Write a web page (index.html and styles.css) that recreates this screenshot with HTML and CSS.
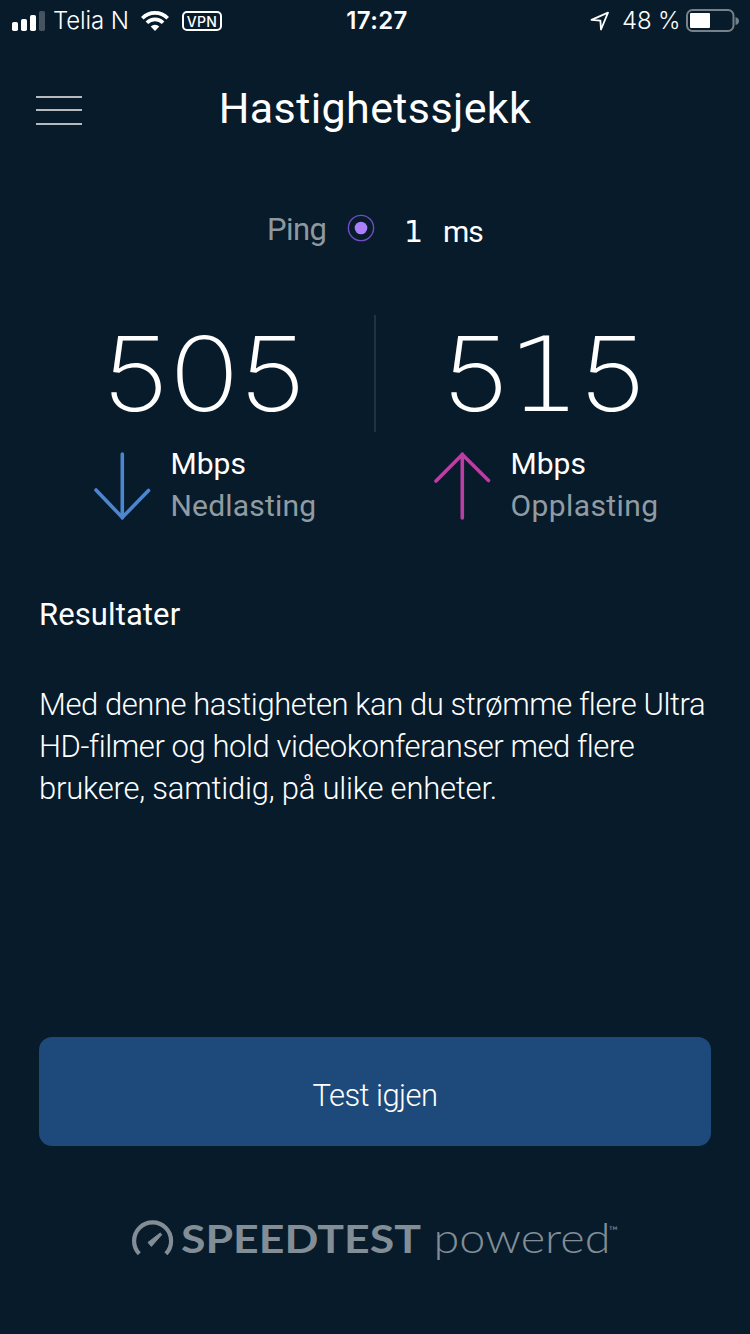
FILE: index.html
```html
<!DOCTYPE html>
<html lang="no">
<head>
<meta charset="utf-8">
<title>Hastighetssjekk</title>
<link rel="stylesheet" href="styles.css">
</head>
<body>
<div class="screen">
  <div class="status">
    <div class="status-left">
      <svg class="signal" width="34" height="20" viewBox="0 0 34 20"><g fill="#fff"><rect x="0" y="11" width="6" height="9" rx="1.8"/><rect x="9" y="8" width="6" height="12" rx="1.8"/><rect x="18" y="4" width="6" height="16" rx="1.8"/></g><rect x="27" y="0" width="6" height="20" rx="1.8" fill="#47545f"/></svg>
      <span class="carrier">Telia N</span>
      <svg class="wifi" width="28" height="20" viewBox="0 0 28 20"><g fill="none" stroke="#fff" stroke-width="3.7"><path d="M1.3 7.2a18 18 0 0 1 25.4 0"/><path d="M5.900 11.8a11.5 11.5 0 0 1 16.2 0"/></g><path d="M14 20l-4.3-4.4a6.1 6.1 0 0 1 8.6 0z" fill="#fff"/></svg>
      <span class="vpn">VPN</span>
    </div>
    <div class="clock">17:27</div>
    <div class="status-right">
      <svg class="arrow" width="20" height="20" viewBox="0 0 20 20"><path d="M1.500 8.800L18 1.700L11 18.500L10.400 9.600z" fill="none" stroke="#fff" stroke-width="1.800" stroke-linejoin="round"/></svg>
      <span class="percent">48 %</span>
      <svg class="battery" width="54" height="24" viewBox="0 0 54 24"><rect x="1" y="1" width="46.500" height="21" rx="5.500" fill="none" stroke="#77818a" stroke-width="2"/><rect x="4" y="4" width="20" height="15" rx="1" fill="#fff"/><path d="M49.500 8q3.500 1 3.500 4t-3.500 4z" fill="#77818a"/></svg>
    </div>
  </div>

  <header class="header">
    <svg class="menu" width="46" height="30" viewBox="0 0 46 30"><path d="M0 1h46v2H0zM0 14h46v2H0zM0 28h46v2H0z" fill="#b5babe"/></svg>
    <h1 class="title">Hastighetssjekk</h1>
  </header>

  <div class="ping">
    <span class="ping-label">Ping</span>
    <svg class="ping-dot" width="28" height="28" viewBox="0 0 28 28"><circle cx="14" cy="14" r="12.600" fill="none" stroke="#704dc0" stroke-width="1.400"/><circle cx="14" cy="14" r="6.300" fill="#ab7efa"/></svg>
    <span class="ping-value">1</span>
    <span class="ping-unit">ms</span>
  </div>

  <main class="speeds">
    <section class="speed">
      <div class="number"><span>5</span><span>0</span><span>5</span></div>
      <div class="detail">
        <svg width="58" height="70" viewBox="0 0 58 70"><path d="M28.300 3v64M2 39L28.300 66.500L54.500 39.500" fill="none" stroke="#4c86cf" stroke-width="3.600" stroke-linecap="round"/></svg>
        <div class="labels"><div class="unit">Mbps</div><div class="kind">Nedlasting</div></div>
      </div>
    </section>
    <div class="divider"></div>
    <section class="speed">
      <div class="number"><span>5</span><span class="one">1</span><span>5</span></div>
      <div class="detail">
        <svg width="58" height="70" viewBox="0 0 58 70"><path d="M28.300 67V3M2 30L28.300 3.500L54.500 29.500" fill="none" stroke="#bb3fa3" stroke-width="3.600" stroke-linecap="round"/></svg>
        <div class="labels"><div class="unit">Mbps</div><div class="kind up">Opplasting</div></div>
      </div>
    </section>
  </main>

  <section class="results">
    <h2 class="results-title">Resultater</h2>
    <p class="results-text">Med denne hastigheten kan du strømme flere Ultra<br>HD-filmer og hold videokonferanser med flere<br><span class="last-line">brukere, samtidig, på ulike enheter.</span></p>
  </section>

  <button class="retry">Test igjen</button>

  <footer class="brand">
    <svg width="500" height="60" viewBox="0 0 500 60" fill="#828d96">
      <path d="M19.300 43.800A18.500 18.500 0 1 1 45.900 43.800" fill="none" stroke="#828d96" stroke-width="4.200"/>
      <path d="M41.800 24.600L40.200 23L28 32.400L31.400 36.400z" stroke="#828d96" stroke-width="1"/>
      <text class="brand-bold" x="61" y="43" textLength="240" lengthAdjust="spacingAndGlyphs">SPEEDTEST</text>
      <text class="brand-light" x="313.500" y="43" textLength="177" lengthAdjust="spacingAndGlyphs">powered</text>
      <text class="brand-tm" x="489" y="25" textLength="10">™</text>
    </svg>
  </footer>
</div>
</body>
</html>
```
FILE: styles.css
```css
* { box-sizing: border-box; }
body { margin: 0; background: #071b2b; }
h1, h2, p { margin: 0; font-weight: 400; }
svg { display: block; flex: none; }
.screen {
  width: 750px; height: 1334px; overflow: hidden;
  display: flex; flex-direction: column;
  background: #071b2b; color: #fff;
  font-family: Roboto, "Liberation Sans", sans-serif;
  white-space: nowrap;
}
.status {
  height: 40px; padding: 0 10px 0 12px;
  display: grid; grid-template-columns: 1fr auto 1fr; align-items: center;
  font-family: Inter, sans-serif;
  font-size: 24px; line-height: 42px;
}
.status-left, .status-right { display: flex; align-items: center; }
.status-right { justify-content: flex-end; }
.signal, .wifi, .vpn, .arrow, .battery { position: relative; top: -0.5px; }
.carrier { width: 76px; margin-left: 7px; letter-spacing: -0.1px; font-weight: 350; }
.wifi { margin-left: 12px; }
.vpn {
  width: 40px; height: 20px; margin-left: 13px;
  border: 2px solid #fff; border-radius: 5px;
  font-size: 14px; line-height: 17px; font-weight: 500; text-align: center; letter-spacing: 0.4px;
}
.clock { padding-left: 2px; font-weight: 600; letter-spacing: 0.4px; }
.percent { width: 58px; margin: 0 6px 0 12px; letter-spacing: -0.2px; font-weight: 350; }
.header {
  height: 130px; padding: 40px 36px 0;
  display: grid; grid-template-columns: 46px 1fr 46px;
}
.menu { margin-top: 15px; }
.title { text-align: center; font-size: 43px; line-height: 57px; letter-spacing: 0.4px; }
.ping {
  height: 140px; padding: 38px 0 0 267px;
  display: flex; align-items: flex-start;
  font-size: 31px; line-height: 43px;
}
.ping-label { width: 79.5px; color: #8e989f; letter-spacing: -0.6px; }
.ping-dot { margin-top: 6px; }
.ping-value { width: 39px; margin: 2px 0 0 29.5px; font-family: "DejaVu Sans", sans-serif; font-size: 30px; }
.ping-unit { margin-top: 2px; font-size: 30px; letter-spacing: -1px; }
.speeds {
  height: 281px; padding: 5px 0 0 94px;
  display: grid; grid-template-columns: 280px 2px 338px; justify-content: start;
}
.speed:last-child { padding-left: 58px; }
.divider { height: 117px; background: #22323f; }
.number {
  height: 117px; padding-left: 7px;
  display: grid; grid-template-columns: repeat(3, 68.700px);
  font-family: Inter, sans-serif; font-weight: 200;
  font-size: 103px; line-height: 117px; text-align: center;
}
.number span { height: 117px; transform: scaleX(1.12); }
.number .one { font-family: "DejaVu Sans Light", "DejaVu Sans", sans-serif; line-height: 121px; }
.detail { display: flex; align-items: flex-start; padding-top: 19px; }
.labels { margin: -8px 0 0 18.5px; font-size: 30px; line-height: 42px; }
.kind { color: #929ba2; letter-spacing: 0.2px; }
.kind.up { letter-spacing: 0.4px; }
.results { height: 446px; padding: 3px 0 0 39px; font-size: 31px; line-height: 42px; }
.results-title { font-size: 31px; font-weight: 450; letter-spacing: 0.1px; }
.results-text { margin-top: 48px; font-weight: 300; letter-spacing: -0.43px; }
.last-line { letter-spacing: -0.22px; }
.retry {
  width: 672px; height: 109px; margin-left: 39px; padding: 8px 0 0;
  border: 0; border-radius: 13px; background: #1e4a7b; color: #fff;
  font: 300 31px/42px Roboto, sans-serif; letter-spacing: -0.55px;
}
.brand { padding: 64px 0 0 120px; }
.brand-bold { font: 700 39px Lato, sans-serif; }
.brand-light { font: 300 41px Lato, sans-serif; }
.brand-tm { font: 400 12px Lato, sans-serif; }
```
